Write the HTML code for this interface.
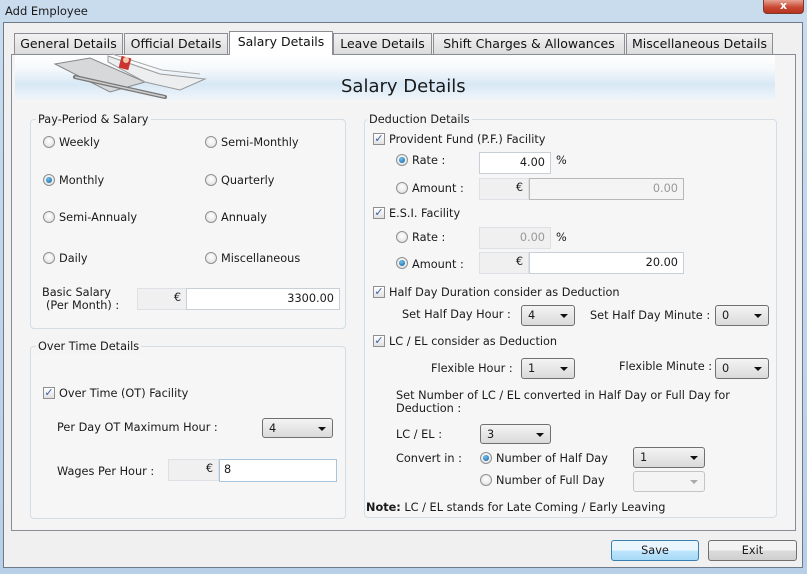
<!DOCTYPE html>
<html><head><meta charset="utf-8"><style>
*{box-sizing:border-box;margin:0;padding:0}
body{width:807px;height:574px;overflow:hidden;position:relative;background:linear-gradient(#c9dcee,#b7cfe7);font-family:"DejaVu Sans","Liberation Sans",sans-serif;font-size:11.3px;color:#1a1a1a}
.a{position:absolute}
.t{position:absolute;white-space:nowrap;line-height:14px;margin-top:1px}
.client{left:3px;top:22px;width:800px;height:546px;background:#f0f0f0;border:1px solid #6d7a8a}
.tab{position:absolute;top:33px;height:21px;border:1px solid #8c8e94;border-bottom:none;background:linear-gradient(#f2f2f2,#dcdcdc);font-size:12.5px;line-height:20px;text-align:center;color:#111}
.tab.sel{top:31px;height:24px;background:#fff;z-index:2}
.panel{left:11px;top:54px;width:785px;height:477px;border:1px solid #898c95;background:#f4f4f4}
.grp{position:absolute;border:1px solid #d3dde6;border-radius:4px;background:#f6f6f6}
.leg{position:absolute;background:#f4f4f4;padding:0 2px;line-height:14px;white-space:nowrap;margin-top:1px}
.rd{position:absolute;width:12px;height:12px;border-radius:50%;border:1px solid #8f9090;background:radial-gradient(circle at 50% 40%,#fff,#dcdcdc)}
.rd.on::after{content:"";position:absolute;left:2px;top:2px;width:6px;height:6px;border-radius:50%;background:radial-gradient(circle at 40% 35%,#6fc3f0,#0d5a9e)}
.cb{position:absolute;width:12px;height:12px;border:1px solid #8f8f8f;background:linear-gradient(#fff,#e0e0e0);font-size:11px;line-height:10px;text-align:center;color:#3d5ba8;font-weight:bold}
.fld{position:absolute;border:1px solid #c9cfd6;background:#fff;text-align:right;padding-right:5px;line-height:19px;white-space:nowrap}
.gr{background:#f0f0f0;border-color:#dde1e5}
.dis{background:#f4f4f4;color:#999;border-color:#b8b8b8}
.cmb{position:absolute;border:1px solid #707070;border-radius:3px;background:linear-gradient(#f4f4f4,#dadada);padding-left:6px;line-height:19px}
.cmb::after{content:"";position:absolute;right:6px;top:8px;border-left:4px solid transparent;border-right:4px solid transparent;border-top:4px solid #111}
.cmb.dis{border-color:#c5c5c5;background:#f4f4f4}
.cmb.dis::after{border-top-color:#aaa}
.btn{position:absolute;border:1px solid #707070;border-radius:3px;background:linear-gradient(#f3f3f3 50%,#dcdcdc 50%,#cfcfcf);text-align:center;line-height:19px}
</style></head><body>
<div class="t" style="left:5px;top:3px;font-size:11.5px">Add Employee</div>
<div class="a" style="left:763px;top:0;width:41px;height:14px;border:1px solid #7b3a32;border-top:none;border-radius:0 0 4px 4px;background:linear-gradient(#e7a394,#c94a35 55%,#b7321d);color:#fff;font-weight:bold;font-size:11px;text-align:center;line-height:12px">x</div>
<div class="a client"></div>
<div class="a panel"></div>
<div class="tab" style="left:14px;width:109px">General Details</div>
<div class="tab" style="left:124px;width:104px">Official Details</div>
<div class="tab sel" style="left:229px;width:104px">Salary Details</div>
<div class="tab" style="left:333px;width:99px">Leave Details</div>
<div class="tab" style="left:433px;width:192px">Shift Charges &amp; Allowances</div>
<div class="tab" style="left:626px;width:147px">Miscellaneous Details</div>
<div class="a" style="left:15px;top:55px;width:760px;height:47px;background:linear-gradient(#ffffff 0%,#f5f9fc 30%,#d8e8f5 62%,#e8f1f9 85%,#f6f6f6 100%)"></div>
<svg class="a" style="left:50px;top:52px" width="160" height="50">
<path d="M5 12 L60 40 L95 30 L40 6 Z" fill="#d6d8da" stroke="#888" stroke-width="1"/>
<path d="M58 4 L110 22 L155 27 L130 38 L95 30 L58 10 Z" fill="#eceeef" stroke="#999"/>
<path d="M62 2 L112 18 L150 22" fill="none" stroke="#aaa"/>
<rect x="70" y="5" width="10" height="12" fill="#c33" transform="rotate(15 75 11)"/>
<circle cx="76" cy="8" r="3" fill="#f2c9a8"/>
<path d="M25 25 L115 45" stroke="#777" stroke-width="4" stroke-linecap="round"/>
<path d="M25 25 L115 45" stroke="#ccc" stroke-width="1.5"/>
</svg>
<div class="t" style="left:341px;top:76px;font-size:18px;line-height:20px">Salary Details</div>

<div class="grp" style="left:30px;top:119px;width:316px;height:210px"></div>
<div class="leg" style="left:36px;top:112px">Pay-Period &amp; Salary</div>
<div class="rd" style="left:43px;top:136px"></div><div class="t" style="left:59px;top:135px">Weekly</div>
<div class="rd" style="left:205px;top:136px"></div><div class="t" style="left:221px;top:135px">Semi-Monthly</div>
<div class="rd on" style="left:43px;top:174px"></div><div class="t" style="left:59px;top:173px">Monthly</div>
<div class="rd" style="left:205px;top:174px"></div><div class="t" style="left:221px;top:173px">Quarterly</div>
<div class="rd" style="left:43px;top:211px"></div><div class="t" style="left:59px;top:210px">Semi-Annualy</div>
<div class="rd" style="left:205px;top:211px"></div><div class="t" style="left:221px;top:210px">Annualy</div>
<div class="rd" style="left:43px;top:252px"></div><div class="t" style="left:59px;top:251px">Daily</div>
<div class="rd" style="left:205px;top:252px"></div><div class="t" style="left:221px;top:251px">Miscellaneous</div>
<div class="t" style="left:42px;top:285px">Basic Salary</div>
<div class="t" style="left:46px;top:298px">(Per Month) :</div>
<div class="fld gr" style="left:137px;top:288px;width:50px;height:22px;line-height:17px">€</div>
<div class="fld" style="left:186px;top:288px;width:154px;height:22px;line-height:20px">3300.00</div>

<div class="grp" style="left:30px;top:346px;width:316px;height:173px"></div>
<div class="leg" style="left:36px;top:339px">Over Time Details</div>
<div class="cb" style="left:43px;top:387px">✓</div><div class="t" style="left:59px;top:386px">Over Time (OT) Facility</div>
<div class="t" style="left:57px;top:420px">Per Day OT Maximum Hour :</div>
<div class="cmb" style="left:262px;top:418px;width:71px;height:20px">4</div>
<div class="t" style="left:57px;top:464px">Wages Per Hour :</div>
<div class="fld gr" style="left:168px;top:459px;width:51px;height:22px;line-height:17px">€</div>
<div class="fld" style="left:219px;top:459px;width:118px;height:23px;text-align:left;padding-left:4px;border-color:#a9c3db">8</div>

<div class="grp" style="left:364px;top:119px;width:413px;height:399px"></div>
<div class="leg" style="left:367px;top:112px">Deduction Details</div>
<div class="cb" style="left:373px;top:133px">✓</div><div class="t" style="left:389px;top:132px">Provident Fund (P.F.) Facility</div>
<div class="rd on" style="left:396px;top:154px"></div><div class="t" style="left:412px;top:153px">Rate :</div>
<div class="fld" style="left:479px;top:152px;width:72px;height:22px;line-height:20px">4.00</div><div class="t" style="left:556px;top:153px">%</div>
<div class="rd" style="left:396px;top:182px"></div><div class="t" style="left:412px;top:181px">Amount :</div>
<div class="fld gr" style="left:479px;top:178px;width:50px;height:22px;line-height:17px">€</div>
<div class="fld dis" style="left:529px;top:178px;width:155px;height:22px">0.00</div>
<div class="cb" style="left:373px;top:207px">✓</div><div class="t" style="left:389px;top:206px">E.S.I. Facility</div>
<div class="rd" style="left:396px;top:231px"></div><div class="t" style="left:412px;top:230px">Rate :</div>
<div class="fld gr" style="left:479px;top:227px;width:72px;height:22px;color:#999;line-height:20px">0.00</div><div class="t" style="left:556px;top:230px">%</div>
<div class="rd on" style="left:396px;top:257px"></div><div class="t" style="left:412px;top:257px">Amount :</div>
<div class="fld gr" style="left:479px;top:252px;width:50px;height:22px;line-height:17px">€</div>
<div class="fld" style="left:529px;top:252px;width:155px;height:22px">20.00</div>
<div class="cb" style="left:373px;top:286px">✓</div><div class="t" style="left:389px;top:285px">Half Day Duration consider as Deduction</div>
<div class="t" style="left:402px;top:307px">Set Half Day Hour :</div>
<div class="cmb" style="left:521px;top:305px;width:54px;height:21px">4</div>
<div class="t" style="left:590px;top:308px">Set Half Day Minute :</div>
<div class="cmb" style="left:715px;top:305px;width:54px;height:21px">0</div>
<div class="cb" style="left:373px;top:335px">✓</div><div class="t" style="left:389px;top:334px">LC / EL consider as Deduction</div>
<div class="t" style="left:431px;top:361px">Flexible Hour :</div>
<div class="cmb" style="left:521px;top:358px;width:54px;height:21px">1</div>
<div class="t" style="left:619px;top:359px">Flexible Minute :</div>
<div class="cmb" style="left:715px;top:358px;width:54px;height:21px">0</div>
<div class="t" style="left:396px;top:388px">Set Number of LC / EL converted in Half Day or Full Day for</div>
<div class="t" style="left:396px;top:401px">Deduction :</div>
<div class="t" style="left:396px;top:427px">LC / EL :</div>
<div class="cmb" style="left:480px;top:424px;width:71px;height:20px">3</div>
<div class="t" style="left:396px;top:451px">Convert in :</div>
<div class="rd on" style="left:480px;top:452px"></div><div class="t" style="left:496px;top:451px">Number of Half Day</div>
<div class="cmb" style="left:633px;top:447px;width:72px;height:21px">1</div>
<div class="rd" style="left:480px;top:474px"></div><div class="t" style="left:496px;top:473px">Number of Full Day</div>
<div class="cmb dis" style="left:633px;top:471px;width:72px;height:21px"></div>
<div class="t" style="left:366px;top:500px"><b>Note:</b> LC / EL stands for Late Coming / Early Leaving</div>

<div class="btn" style="left:611px;top:540px;width:88px;height:21px;border-color:#3c7fb1;background:linear-gradient(#eaf6fd 50%,#bee6fd 50%,#a7d9f5)">Save</div>
<div class="btn" style="left:708px;top:540px;width:89px;height:21px">Exit</div>
</body></html>
